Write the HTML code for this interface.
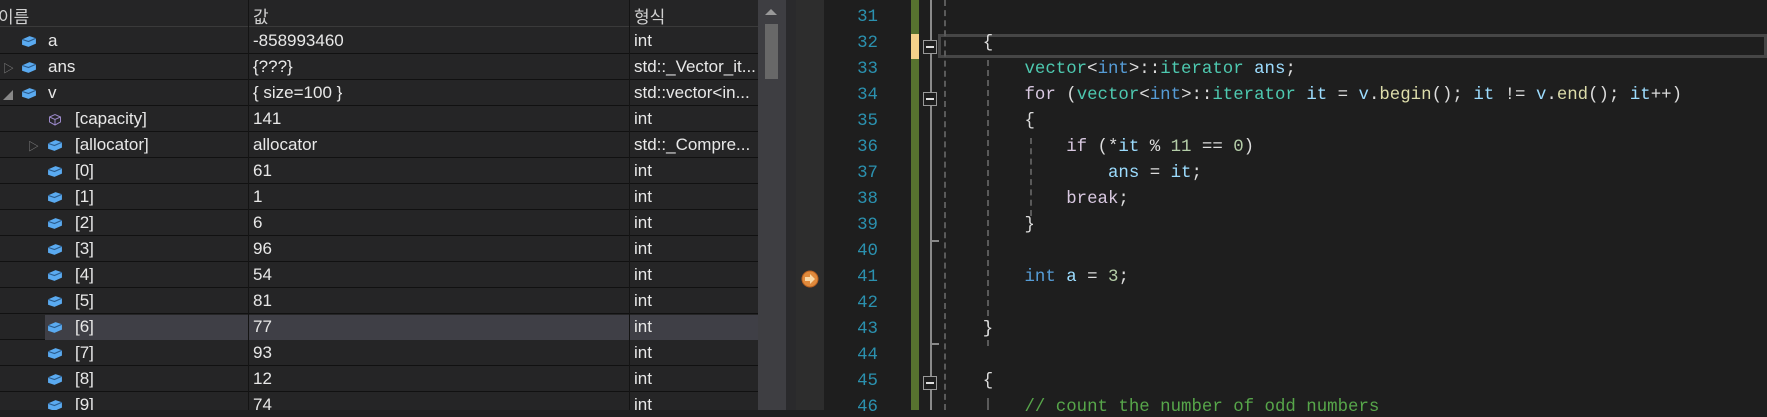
<!DOCTYPE html>
<html><head><meta charset="utf-8"><style>
*{margin:0;padding:0;box-sizing:border-box}
body{width:1767px;height:410px;overflow:hidden;background:#1e1e1e;position:relative;font-family:"Liberation Sans","Noto Sans CJK KR",sans-serif}
.dbg{position:absolute;left:0;top:0;width:758px;height:410px;background:#252526;overflow:hidden}
.hdr{position:absolute;left:0;top:0;width:758px;height:27px;background:#252526;border-bottom:1px solid #3a3a3a;color:#d0d0d0;font-size:17px}
.hdr span{position:absolute;top:3px}
.row{position:absolute;left:0;width:758px;height:26px;border-bottom:1px solid #111;color:#e8e8e8;font-size:17px}
.row span{position:absolute;top:3px;white-space:nowrap}
.c1{position:absolute;left:248px;top:0;width:1px;height:410px;background:#141414}
.c2{position:absolute;left:629px;top:0;width:1px;height:410px;background:#141414}
.ic{position:absolute;top:7px;width:16px;height:13px}
.sb{position:absolute;left:758px;top:0;width:28px;height:410px;background:#3e3e42}
.strip{position:absolute;left:786px;top:0;width:10px;height:410px;background:#2a2a2c}
.marg{position:absolute;left:796px;top:0;width:28px;height:410px;background:#2d2d2d}
.ln{position:absolute;left:824px;width:54px;text-align:right;color:#2b91af;font-family:"Liberation Mono","DejaVu Sans Mono",monospace;font-size:17.4px}
.code{position:absolute;left:941px;white-space:pre;font-family:"Liberation Mono","DejaVu Sans Mono",monospace;font-size:17.4px;color:#dcdcdc}
.k{color:#569cd6}.t{color:#4ec9b0}.v{color:#9cdcfe}.c{color:#d8c8e0}.f{color:#dcdcaa}.n{color:#b5cea8}.b{color:#dcdcdc}.g{color:#57a64a}
.dash{position:absolute;width:0;border-left:2px dashed #5a5a5a}
.fb{position:absolute;left:923px;width:14px;height:14px;border:1px solid #999;background:#1e1e1e}
.fb:after{content:"";position:absolute;left:2px;top:5px;width:8px;height:2px;background:#ddd}
</style></head><body>
<div class="dbg">
<div class="hdr"><span style="left:-2px">이름</span><span style="left:253px">값</span><span style="left:634px">형식</span></div>
<div class="row" style="top:28px"><svg class="ic" style="left:21px" viewBox="0 0 15 12"><path d="M1 4 L8 1 L14 3 L14 8 L7 11 L1 9Z" fill="#5aaaf0"/><path d="M1 4 L7 6 L14 3" stroke="#2a5a8a" fill="none"/></svg><span style="left:48px">a</span><span style="left:253px">-858993460</span><span style="left:634px">int</span></div>
<div class="row" style="top:54px"><span style="left:3px;color:#888;font-size:11px;top:6px">▷</span><svg class="ic" style="left:21px" viewBox="0 0 15 12"><path d="M1 4 L8 1 L14 3 L14 8 L7 11 L1 9Z" fill="#5aaaf0"/><path d="M1 4 L7 6 L14 3" stroke="#2a5a8a" fill="none"/></svg><span style="left:48px">ans</span><span style="left:253px">{???}</span><span style="left:634px">std::_Vector_it...</span></div>
<div class="row" style="top:80px"><span style="left:3px;color:#888;font-size:10px;top:7px">◢</span><svg class="ic" style="left:21px" viewBox="0 0 15 12"><path d="M1 4 L8 1 L14 3 L14 8 L7 11 L1 9Z" fill="#5aaaf0"/><path d="M1 4 L7 6 L14 3" stroke="#2a5a8a" fill="none"/></svg><span style="left:48px">v</span><span style="left:253px">{ size=100 }</span><span style="left:634px">std::vector&lt;in...</span></div>
<div class="row" style="top:106px"><svg class="ic" style="left:47px;height:13px" viewBox="0 0 15 13"><path d="M2 4 L7.5 1.5 L13 4 L13 9 L7.5 12 L2 9Z M2 4 L7.5 6.5 L13 4 M7.5 6.5 L7.5 12" stroke="#9a88c8" fill="none"/></svg><span style="left:75px">[capacity]</span><span style="left:253px">141</span><span style="left:634px">int</span></div>
<div class="row" style="top:132px"><span style="left:28px;color:#888;font-size:11px;top:6px">▷</span><svg class="ic" style="left:47px" viewBox="0 0 15 12"><path d="M1 4 L8 1 L14 3 L14 8 L7 11 L1 9Z" fill="#5aaaf0"/><path d="M1 4 L7 6 L14 3" stroke="#2a5a8a" fill="none"/></svg><span style="left:75px">[allocator]</span><span style="left:253px">allocator</span><span style="left:634px">std::_Compre...</span></div>
<div class="row" style="top:158px"><svg class="ic" style="left:47px" viewBox="0 0 15 12"><path d="M1 4 L8 1 L14 3 L14 8 L7 11 L1 9Z" fill="#5aaaf0"/><path d="M1 4 L7 6 L14 3" stroke="#2a5a8a" fill="none"/></svg><span style="left:75px">[0]</span><span style="left:253px">61</span><span style="left:634px">int</span></div>
<div class="row" style="top:184px"><svg class="ic" style="left:47px" viewBox="0 0 15 12"><path d="M1 4 L8 1 L14 3 L14 8 L7 11 L1 9Z" fill="#5aaaf0"/><path d="M1 4 L7 6 L14 3" stroke="#2a5a8a" fill="none"/></svg><span style="left:75px">[1]</span><span style="left:253px">1</span><span style="left:634px">int</span></div>
<div class="row" style="top:210px"><svg class="ic" style="left:47px" viewBox="0 0 15 12"><path d="M1 4 L8 1 L14 3 L14 8 L7 11 L1 9Z" fill="#5aaaf0"/><path d="M1 4 L7 6 L14 3" stroke="#2a5a8a" fill="none"/></svg><span style="left:75px">[2]</span><span style="left:253px">6</span><span style="left:634px">int</span></div>
<div class="row" style="top:236px"><svg class="ic" style="left:47px" viewBox="0 0 15 12"><path d="M1 4 L8 1 L14 3 L14 8 L7 11 L1 9Z" fill="#5aaaf0"/><path d="M1 4 L7 6 L14 3" stroke="#2a5a8a" fill="none"/></svg><span style="left:75px">[3]</span><span style="left:253px">96</span><span style="left:634px">int</span></div>
<div class="row" style="top:262px"><svg class="ic" style="left:47px" viewBox="0 0 15 12"><path d="M1 4 L8 1 L14 3 L14 8 L7 11 L1 9Z" fill="#5aaaf0"/><path d="M1 4 L7 6 L14 3" stroke="#2a5a8a" fill="none"/></svg><span style="left:75px">[4]</span><span style="left:253px">54</span><span style="left:634px">int</span></div>
<div class="row" style="top:288px"><svg class="ic" style="left:47px" viewBox="0 0 15 12"><path d="M1 4 L8 1 L14 3 L14 8 L7 11 L1 9Z" fill="#5aaaf0"/><path d="M1 4 L7 6 L14 3" stroke="#2a5a8a" fill="none"/></svg><span style="left:75px">[5]</span><span style="left:253px">81</span><span style="left:634px">int</span></div>
<div class="row" style="top:314px"><div style="position:absolute;left:45px;top:1px;width:713px;height:25px;background:#3f3f46"></div><svg class="ic" style="left:47px" viewBox="0 0 15 12"><path d="M1 4 L8 1 L14 3 L14 8 L7 11 L1 9Z" fill="#5aaaf0"/><path d="M1 4 L7 6 L14 3" stroke="#2a5a8a" fill="none"/></svg><span style="left:75px">[6]</span><span style="left:253px">77</span><span style="left:634px">int</span></div>
<div class="row" style="top:340px"><svg class="ic" style="left:47px" viewBox="0 0 15 12"><path d="M1 4 L8 1 L14 3 L14 8 L7 11 L1 9Z" fill="#5aaaf0"/><path d="M1 4 L7 6 L14 3" stroke="#2a5a8a" fill="none"/></svg><span style="left:75px">[7]</span><span style="left:253px">93</span><span style="left:634px">int</span></div>
<div class="row" style="top:366px"><svg class="ic" style="left:47px" viewBox="0 0 15 12"><path d="M1 4 L8 1 L14 3 L14 8 L7 11 L1 9Z" fill="#5aaaf0"/><path d="M1 4 L7 6 L14 3" stroke="#2a5a8a" fill="none"/></svg><span style="left:75px">[8]</span><span style="left:253px">12</span><span style="left:634px">int</span></div>
<div class="row" style="top:392px"><svg class="ic" style="left:47px" viewBox="0 0 15 12"><path d="M1 4 L8 1 L14 3 L14 8 L7 11 L1 9Z" fill="#5aaaf0"/><path d="M1 4 L7 6 L14 3" stroke="#2a5a8a" fill="none"/></svg><span style="left:75px">[9]</span><span style="left:253px">74</span><span style="left:634px">int</span></div>
<div class="c1"></div><div class="c2"></div>
</div>
<div class="sb"><div style="position:absolute;left:7px;top:9px;width:0;height:0;border-left:6px solid transparent;border-right:6px solid transparent;border-bottom:6px solid #999"></div><div style="position:absolute;left:7px;top:24px;width:13px;height:55px;background:#686868"></div></div>
<div class="strip"></div>
<div class="marg"></div>
<div class="ln" style="top:-18px">30</div>
<div class="ln" style="top:8px">31</div>
<div class="ln" style="top:34px">32</div>
<div class="ln" style="top:60px">33</div>
<div class="ln" style="top:86px">34</div>
<div class="ln" style="top:112px">35</div>
<div class="ln" style="top:138px">36</div>
<div class="ln" style="top:164px">37</div>
<div class="ln" style="top:190px">38</div>
<div class="ln" style="top:216px">39</div>
<div class="ln" style="top:242px">40</div>
<div class="ln" style="top:268px">41</div>
<div class="ln" style="top:294px">42</div>
<div class="ln" style="top:320px">43</div>
<div class="ln" style="top:346px">44</div>
<div class="ln" style="top:372px">45</div>
<div class="ln" style="top:398px">46</div>
<div style="position:absolute;left:911px;top:0;width:8px;height:410px;background:#57722f"></div>
<div style="position:absolute;left:911px;top:34px;width:8px;height:25px;background:#f5d18a"></div>
<div style="position:absolute;left:930px;top:0;width:2px;height:410px;background:#8a8a8a"></div>
<div style="position:absolute;left:930px;top:240px;width:9px;height:2px;background:#8a8a8a"></div>
<div style="position:absolute;left:930px;top:343px;width:9px;height:2px;background:#8a8a8a"></div>
<div class="fb" style="top:40px"></div>
<div class="fb" style="top:92px"></div>
<div class="fb" style="top:376px"></div>
<svg style="position:absolute;left:801px;top:270px" width="18" height="18" viewBox="0 0 18 18"><circle cx="9" cy="9" r="8" fill="#e08a3c" stroke="#b86020"/><path d="M4 7 H9 V4 L14 9 L9 14 V11 H4Z" fill="#f8d8a8"/></svg>
<div style="position:absolute;left:938px;top:34px;width:829px;height:24px;border:3px solid #464646"></div>
<div class="dash" style="left:944px;top:0;height:410px"></div>
<div class="dash" style="left:987px;top:60px;height:286px"></div>
<div class="dash" style="left:987px;top:398px;height:12px"></div>
<div class="dash" style="left:1030px;top:138px;height:78px"></div>
<div class="code" style="top:34px">    <span class="b">{</span></div>
<div class="code" style="top:60px">        <span class="t">vector</span>&lt;<span class="k">int</span>&gt;::<span class="t">iterator</span> <span class="v">ans</span>;</div>
<div class="code" style="top:86px">        <span class="c">for</span> (<span class="t">vector</span>&lt;<span class="k">int</span>&gt;::<span class="t">iterator</span> <span class="v">it</span> = <span class="v">v</span>.<span class="f">begin</span>(); <span class="v">it</span> != <span class="v">v</span>.<span class="f">end</span>(); <span class="v">it</span>++)</div>
<div class="code" style="top:112px">        <span class="b">{</span></div>
<div class="code" style="top:138px">            <span class="c">if</span> (*<span class="v">it</span> % <span class="n">11</span> == <span class="n">0</span>)</div>
<div class="code" style="top:164px">                <span class="v">ans</span> = <span class="v">it</span>;</div>
<div class="code" style="top:190px">            <span class="c">break</span>;</div>
<div class="code" style="top:216px">        <span class="b">}</span></div>
<div class="code" style="top:268px">        <span class="k">int</span> <span class="v">a</span> = <span class="n">3</span>;</div>
<div class="code" style="top:320px">    <span class="b">}</span></div>
<div class="code" style="top:372px">    <span class="b">{</span></div>
<div class="code" style="top:398px">        <span class="g">// count the number of odd numbers</span></div>
</body></html>
